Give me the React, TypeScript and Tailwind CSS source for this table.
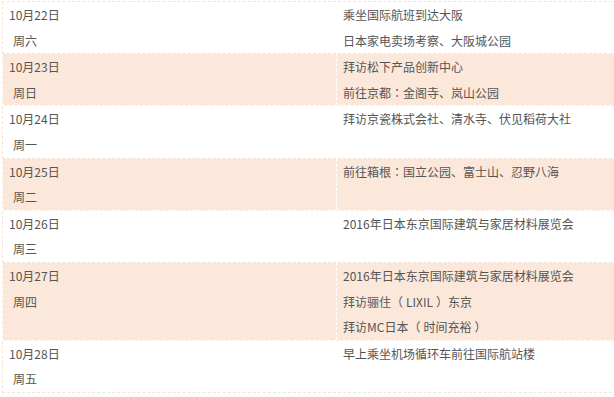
import React from "react";

type Row = { date: string; day: string; items: React.ReactNode[]; shaded: boolean };

const P = ({ c }: { c: string }) => (
  <span style={{ fontFamily: '"Noto Sans CJK TC", "Noto Sans CJK SC", sans-serif' }}>{c}</span>
);

const Open = () => <span className="inline-block mr-[3px]">（</span>;
const Close = () => <span className="inline-block ml-[3px]">）</span>;

const rows: Row[] = [
  { date: "10月22日", day: "周六", items: ["乘坐国际航班到达大阪", "日本家电卖场考察、大阪城公园"], shaded: false },
  {
    date: "10月23日",
    day: "周日",
    items: [
      "拜访松下产品创新中心",
      <>
        前往京都<P c="：" />金阁寺、岚山公园
      </>,
    ],
    shaded: true,
  },
  { date: "10月24日", day: "周一", items: ["拜访京瓷株式会社、清水寺、伏见稻荷大社"], shaded: false },
  {
    date: "10月25日",
    day: "周二",
    items: [
      <>
        前往箱根<P c="：" />国立公园、富士山、忍野八海
      </>,
    ],
    shaded: true,
  },
  { date: "10月26日", day: "周三", items: ["2016年日本东京国际建筑与家居材料展览会"], shaded: false },
  {
    date: "10月27日",
    day: "周四",
    items: [
      "2016年日本东京国际建筑与家居材料展览会",
      <>
        拜访骊住<Open />LIXIL<Close />东京
      </>,
      <>
        拜访MC日本<Open />时间充裕<Close />
      </>,
    ],
    shaded: true,
  },
  { date: "10月28日", day: "周五", items: ["早上乘坐机场循环车前往国际航站楼"], shaded: false },
];

export default function App() {
  return (
    <div
      className="w-[614px] h-[397px] overflow-hidden bg-white text-[12px] leading-[25.6px] text-[#555555]"
      style={{ fontFamily: '"Noto Sans CJK SC", "Noto Sans", sans-serif' }}
    >
      <div className="pl-[2px] pt-[1px]">
        <div className="w-[640px] border-t border-dashed border-[#f8e2d2]">
          {rows.map((r, i) => (
            <div
              key={i}
              className={
                r.shaded
                  ? "flex bg-[#fce8da] border-l border-b border-dashed border-white"
                  : "flex bg-white border-l border-b border-dashed border-[#f8e2d2]"
              }
            >
              <div
                className={
                  r.shaded
                    ? "w-[334px] shrink-0 pl-[6px] border-r border-dashed border-white"
                    : "w-[334px] shrink-0 pl-[6px] border-r border-dashed border-transparent"
                }
              >
                <div>{r.date}</div>
                <div className="pl-[4px]">{r.day}</div>
              </div>
              <div className="flex-1 pl-[6px]">
                {r.items.map((t, j) => (
                  <div key={j}>{t}</div>
                ))}
              </div>
            </div>
          ))}
        </div>
      </div>
    </div>
  );
}
